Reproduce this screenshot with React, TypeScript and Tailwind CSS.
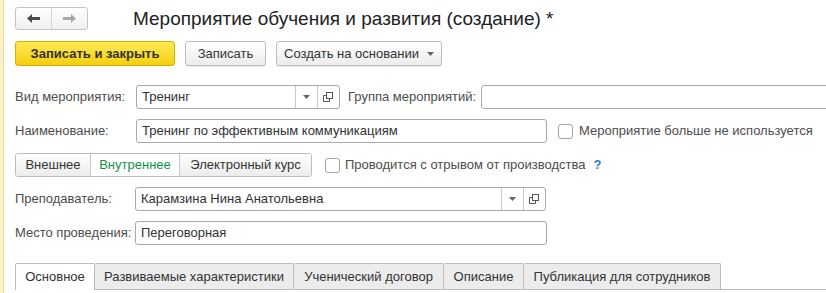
import type { ReactNode } from 'react';

const font = { fontFamily: '"Liberation Sans", Arial, sans-serif' };

// Маленький треугольник выпадающего списка
const DropArrow = () => (
  <svg width="7" height="4" viewBox="0 0 7 4">
    <path d="M0 0 H7 L3.5 4 Z" fill="#666" />
  </svg>
);

// Иконка "открыть" из 1С
const OpenIcon = () => (
  <svg width="11" height="11" viewBox="0 0 11 11" fill="none" stroke="#555" strokeWidth="1">
    <rect x="3.5" y="0.5" width="6" height="6" />
    <path d="M3.5 3.5 H0.5 V9.5 H6.5 V6.5" />
  </svg>
);

const Checkbox = () => (
  <span className="inline-block w-[15px] h-[15px] rounded-[3px] border border-[#a3a3a3] bg-white" />
);

const Btn = ({ children, className = '' }: { children: ReactNode; className?: string }) => (
  <div
    className={`h-[25px] flex items-center justify-center rounded-[3px] border border-[#bdbdbd] bg-gradient-to-b from-white to-[#ececec] text-[13px] text-[#333] shadow-[0_1px_1px_rgba(0,0,0,0.08)] ${className}`}
  >
    {children}
  </div>
);

const Field = ({
  value,
  width,
  select = false,
}: {
  value: string;
  width: string;
  select?: boolean;
}) => (
  <div className={`h-[24px] shrink-0 flex rounded-[3px] border border-[#a9a9a9] bg-white ${width}`}>
    <div className="flex-1 flex items-center pl-[5px] text-[13px] text-[#333] truncate">{value}</div>
    {select && (
      <>
        <div className="w-[22px] flex items-center justify-center border-l border-[#c8c8c8]">
          <DropArrow />
        </div>
        <div className="w-[22px] flex items-center justify-center border-l border-[#c8c8c8]">
          <OpenIcon />
        </div>
      </>
    )}
  </div>
);

const Label = ({ children, width }: { children: ReactNode; width: string }) => (
  <div className={`${width} shrink-0 text-[13px] text-[#4d4d4d]`}>{children}</div>
);

const tabs = [
  { name: 'Основное', w: 'w-[80px]', active: true },
  { name: 'Развиваемые характеристики', w: 'w-[199px]' },
  { name: 'Ученический договор', w: 'w-[150px]' },
  { name: 'Описание', w: 'w-[80px]' },
  { name: 'Публикация для сотрудников', w: 'w-[197px]' },
];

export default function App() {
  return (
    <div className="w-[826px] h-[293px] flex bg-white overflow-hidden" style={font}>
      {/* жёлтая полоска слева */}
      <div className="w-[4px] shrink-0 bg-[#fcf1c9] border-r border-[#efd98f]" />

      <div className="flex-1 min-w-0 pl-[11px] pt-[7px] overflow-hidden">
        {/* Навигация и заголовок */}
        <div className="flex items-center h-[23px]">
          <div className="flex h-[23px] w-[73px] rounded-[3px] border border-[#c4c4c4] bg-gradient-to-b from-white to-[#f0f0f0]">
            <div className="flex-1 flex items-center justify-center border-r border-[#d6d6d6]">
              <svg width="13" height="9" viewBox="0 0 13 9">
                <path d="M0 4.5 L5 0 V3 H13 V6 H5 V9 Z" fill="#4a4a4a" />
              </svg>
            </div>
            <div className="flex-1 flex items-center justify-center">
              <svg width="13" height="9" viewBox="0 0 13 9">
                <path d="M13 4.5 L8 0 V3 H0 V6 H8 V9 Z" fill="#a8a8a8" />
              </svg>
            </div>
          </div>
          <h1 className="ml-[45px] text-[19px] text-[#222] leading-none">
            Мероприятие обучения и развития (создание) *
          </h1>
        </div>

        {/* Командная панель */}
        <div className="flex gap-[10px] mt-[11px]">
          <div className="h-[25px] w-[160px] flex items-center justify-center rounded-[3px] border border-[#d3b300] bg-gradient-to-b from-[#ffe94f] to-[#f4cf00] text-[13px] font-bold text-[#333]">
            Записать и закрыть
          </div>
          <Btn className="w-[81px]">Записать</Btn>
          <Btn className="w-[166px] gap-[8px]">
            <span>Создать на основании</span>
            <DropArrow />
          </Btn>
        </div>

        {/* Поля формы */}
        <div className="mt-[19px] flex flex-col gap-[10px]">
          <div className="flex items-center">
            <Label width="w-[121px]">Вид мероприятия:</Label>
            <Field value="Тренинг" width="w-[204px]" select />
            <div className="ml-[8px] w-[133px] shrink-0 text-[13px] text-[#4d4d4d]">Группа мероприятий:</div>
            <Field value="" width="w-[360px]" />
          </div>

          <div className="flex items-center">
            <Label width="w-[121px]">Наименование:</Label>
            <Field value="Тренинг по эффективным коммуникациям" width="w-[411px]" />
            <div className="ml-[11px] flex items-center gap-[6px]">
              <Checkbox />
              <span className="text-[13px] text-[#4d4d4d]">Мероприятие больше не используется</span>
            </div>
          </div>

          <div className="flex items-center">
            <div className="flex h-[24px] rounded-[3px] border border-[#bdbdbd] overflow-hidden text-[13px]">
              <div className="w-[74px] flex items-center justify-center bg-gradient-to-b from-white to-[#ececec] text-[#333]">
                Внешнее
              </div>
              <div className="w-[90px] flex items-center justify-center bg-white border-x border-[#c8c8c8] text-[#14924a]">
                Внутреннее
              </div>
              <div className="w-[131px] flex items-center justify-center bg-gradient-to-b from-white to-[#ececec] text-[#333]">
                Электронный курс
              </div>
            </div>
            <div className="ml-[13px] flex items-center gap-[5px]">
              <Checkbox />
              <span className="text-[13px] text-[#4d4d4d]">Проводится с отрывом от производства</span>
              <span className="ml-[3px] text-[13px] font-bold text-[#2b7cc9]">?</span>
            </div>
          </div>

          <div className="flex items-center">
            <Label width="w-[120px]">Преподаватель:</Label>
            <Field value="Карамзина Нина Анатольевна" width="w-[411px]" select />
          </div>

          <div className="flex items-center">
            <Label width="w-[120px]">Место проведения:</Label>
            <Field value="Переговорная" width="w-[412px]" />
          </div>
        </div>

        {/* Закладки */}
        <div className="mt-[18px] flex border-b border-[#bdbdbd] h-[27px]">
          {tabs.map(t => (
            <div
              key={t.name}
              className={`${t.w} shrink-0 flex items-center justify-center text-[13px] text-[#333] border-t border-r border-[#bdbdbd] first:border-l rounded-t-[2px] ${
                t.active ? 'bg-white -mb-px h-[27px]' : 'bg-[#ececec]'
              }`}
            >
              {t.name}
            </div>
          ))}
        </div>
      </div>
    </div>
  );
}
